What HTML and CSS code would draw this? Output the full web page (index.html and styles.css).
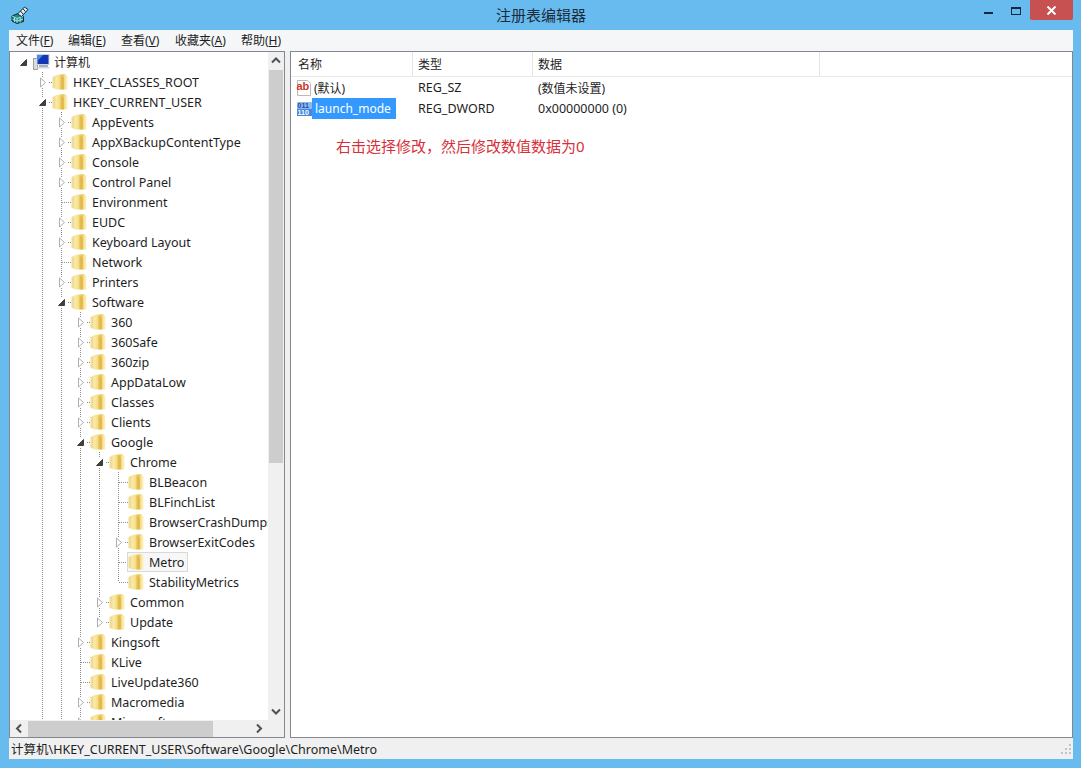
FILE: index.html

```html
<!DOCTYPE html>
<html lang="zh-CN">
<head>
  <meta charset="UTF-8">
  <title>注册表编辑器</title>
  <link rel="stylesheet" href="styles.css">
</head>

<body>

  <svg class="defs" width="0" height="0">
    <defs>
      <linearGradient id="fold" x1="0" y1="0" x2="1" y2="0">
        <stop offset="0" stop-color="#fbeeb0"/>
        <stop offset="0.35" stop-color="#f4dd86"/>
        <stop offset="0.62" stop-color="#e8c156"/>
        <stop offset="0.78" stop-color="#f6e296"/>
        <stop offset="1" stop-color="#fdf3c4"/>
      </linearGradient>
    </defs>
    <symbol id="folder" viewBox="0 0 16 18">
      <path d="M0.5 4 L4 2.5 L4 16 L0.5 15 Z" fill="#f0dc98"/>
      <path d="M3.5 2 L13 1 L15.5 3 L15.5 16.5 L3.5 16.5 Z" fill="url(#fold)"/>
      <path d="M8.5 2 L12 5 L12 16.5 L8.5 16.5 Z" fill="#dfae3e" opacity="0.55"/>
    </symbol>
    <symbol id="closed" viewBox="0 0 19 20">
      <rect x="5" y="5" width="10" height="10" fill="#fff"/>
      <path d="M7.5 6 L12.5 10.5 L7.5 15 Z" fill="#fff" stroke="#b0b0b0"/>
    </symbol>
    <symbol id="open" viewBox="0 0 19 20">
      <rect x="5" y="5" width="10" height="10" fill="#fff"/>
      <path d="M12.5 7.5 L12.5 13.5 L6.5 13.5 Z" fill="#404040" stroke="#404040"/>
    </symbol>
  </svg>

  <div class="titlebar">
    <svg class="appicon" width="18" height="18" viewBox="0 0 18 18">
      <path d="M1 10 L7 7.5 L12.5 10 L12.5 15.5 L6 17.5 L1 15 Z" fill="#1f8f88" stroke="#10283a"/>
      <path d="M1 10 L6 12.5 L12.5 10 M6 12.5 L6 17 M3.5 11.5 L3.5 16 M9.2 11.5 L9.2 16.5 M1.5 13 L6 15 L12 13" fill="none" stroke="#bff0e8" stroke-width="0.8"/>
      <path d="M6.5 8 L13.5 1 L17 3.5 L10.5 10.5 Z" fill="#dfeff2" stroke="#10283a"/>
      <path d="M9.5 5 L12 8 M12 2.8 L14.5 5.6" stroke="#10283a"/>
    </svg>
    <div class="title">注册表编辑器</div>
    <div class="winbtns">
      <span class="minbtn"><i></i></span>
      <span class="maxbtn"><i></i></span>
      <span class="closebtn">
        <svg width="11" height="9" viewBox="0 0 11 9"><path d="M1.5 0.5 L9.5 8.5 M9.5 0.5 L1.5 8.5" stroke="#fff" stroke-width="2"/></svg>
      </span>
    </div>
  </div>

  <div class="menubar">
    <span class="m1">文件(<u>F</u>)</span>
    <span class="m2">编辑(<u>E</u>)</span>
    <span class="m3">查看(<u>V</u>)</span>
    <span class="m4">收藏夹(<u>A</u>)</span>
    <span class="m5">帮助(<u>H</u>)</span>
  </div>

  <div class="main">
    <div class="treepane">
      <div class="treeview">
        <div class="tree">
          <div class="row"><i class="c"><svg><use href="#open"/></svg></i>
            <svg class="pc" width="17" height="18" viewBox="0 0 17 18">
              <rect x="0.5" y="5.5" width="4" height="11" fill="#dcdcdc" stroke="#8a8a8a" stroke-width="0.8"/>
              <rect x="3.5" y="1" width="13" height="11" fill="#c8d4e4"/>
              <rect x="4.5" y="2" width="11" height="9" fill="#1436b0"/>
              <path d="M4.5 2 L10 2 L4.5 8 Z" fill="#3f8cf0"/>
              <rect x="6" y="12" width="9" height="2" fill="#a8b0bc"/>
              <rect x="4.5" y="14" width="12" height="1.5" fill="#d4d8de"/>
            </svg>
            <span class="name">计算机</span></div>

          <div class="row"><i class="c"></i><i class="c tee"><svg><use href="#closed"/></svg></i><svg class="fd"><use href="#folder"/></svg><span class="name">HKEY_CLASSES_ROOT</span></div>
          <div class="row"><i class="c"></i><i class="c tee"><svg><use href="#open"/></svg></i><svg class="fd"><use href="#folder"/></svg><span class="name">HKEY_CURRENT_USER</span></div>

          <div class="row"><i class="c"></i><i class="c g"></i><i class="c tee"><svg><use href="#closed"/></svg></i><svg class="fd"><use href="#folder"/></svg><span class="name">AppEvents</span></div>
          <div class="row"><i class="c"></i><i class="c g"></i><i class="c tee"><svg><use href="#closed"/></svg></i><svg class="fd"><use href="#folder"/></svg><span class="name">AppXBackupContentType</span></div>
          <div class="row"><i class="c"></i><i class="c g"></i><i class="c tee"><svg><use href="#closed"/></svg></i><svg class="fd"><use href="#folder"/></svg><span class="name">Console</span></div>
          <div class="row"><i class="c"></i><i class="c g"></i><i class="c tee"><svg><use href="#closed"/></svg></i><svg class="fd"><use href="#folder"/></svg><span class="name">Control Panel</span></div>
          <div class="row"><i class="c"></i><i class="c g"></i><i class="c tee"></i><svg class="fd"><use href="#folder"/></svg><span class="name">Environment</span></div>
          <div class="row"><i class="c"></i><i class="c g"></i><i class="c tee"><svg><use href="#closed"/></svg></i><svg class="fd"><use href="#folder"/></svg><span class="name">EUDC</span></div>
          <div class="row"><i class="c"></i><i class="c g"></i><i class="c tee"><svg><use href="#closed"/></svg></i><svg class="fd"><use href="#folder"/></svg><span class="name">Keyboard Layout</span></div>
          <div class="row"><i class="c"></i><i class="c g"></i><i class="c tee"></i><svg class="fd"><use href="#folder"/></svg><span class="name">Network</span></div>
          <div class="row"><i class="c"></i><i class="c g"></i><i class="c tee"><svg><use href="#closed"/></svg></i><svg class="fd"><use href="#folder"/></svg><span class="name">Printers</span></div>
          <div class="row"><i class="c"></i><i class="c g"></i><i class="c tee"><svg><use href="#open"/></svg></i><svg class="fd"><use href="#folder"/></svg><span class="name">Software</span></div>

          <div class="row"><i class="c"></i><i class="c g"></i><i class="c g"></i><i class="c tee"><svg><use href="#closed"/></svg></i><svg class="fd"><use href="#folder"/></svg><span class="name">360</span></div>
          <div class="row"><i class="c"></i><i class="c g"></i><i class="c g"></i><i class="c tee"><svg><use href="#closed"/></svg></i><svg class="fd"><use href="#folder"/></svg><span class="name">360Safe</span></div>
          <div class="row"><i class="c"></i><i class="c g"></i><i class="c g"></i><i class="c tee"><svg><use href="#closed"/></svg></i><svg class="fd"><use href="#folder"/></svg><span class="name">360zip</span></div>
          <div class="row"><i class="c"></i><i class="c g"></i><i class="c g"></i><i class="c tee"><svg><use href="#closed"/></svg></i><svg class="fd"><use href="#folder"/></svg><span class="name">AppDataLow</span></div>
          <div class="row"><i class="c"></i><i class="c g"></i><i class="c g"></i><i class="c tee"><svg><use href="#closed"/></svg></i><svg class="fd"><use href="#folder"/></svg><span class="name">Classes</span></div>
          <div class="row"><i class="c"></i><i class="c g"></i><i class="c g"></i><i class="c tee"><svg><use href="#closed"/></svg></i><svg class="fd"><use href="#folder"/></svg><span class="name">Clients</span></div>
          <div class="row"><i class="c"></i><i class="c g"></i><i class="c g"></i><i class="c tee"><svg><use href="#open"/></svg></i><svg class="fd"><use href="#folder"/></svg><span class="name">Google</span></div>

          <div class="row"><i class="c"></i><i class="c g"></i><i class="c g"></i><i class="c g"></i><i class="c tee"><svg><use href="#open"/></svg></i><svg class="fd"><use href="#folder"/></svg><span class="name">Chrome</span></div>

          <div class="row"><i class="c"></i><i class="c g"></i><i class="c g"></i><i class="c g"></i><i class="c g"></i><i class="c tee"></i><svg class="fd"><use href="#folder"/></svg><span class="name">BLBeacon</span></div>
          <div class="row"><i class="c"></i><i class="c g"></i><i class="c g"></i><i class="c g"></i><i class="c g"></i><i class="c tee"></i><svg class="fd"><use href="#folder"/></svg><span class="name">BLFinchList</span></div>
          <div class="row"><i class="c"></i><i class="c g"></i><i class="c g"></i><i class="c g"></i><i class="c g"></i><i class="c tee"></i><svg class="fd"><use href="#folder"/></svg><span class="name">BrowserCrashDumps</span></div>
          <div class="row"><i class="c"></i><i class="c g"></i><i class="c g"></i><i class="c g"></i><i class="c g"></i><i class="c tee"><svg><use href="#closed"/></svg></i><svg class="fd"><use href="#folder"/></svg><span class="name">BrowserExitCodes</span></div>
          <div class="row"><i class="c"></i><i class="c g"></i><i class="c g"></i><i class="c g"></i><i class="c g"></i><i class="c tee"></i><span class="current"><svg class="fd"><use href="#folder"/></svg><span class="name">Metro</span></span></div>
          <div class="row"><i class="c"></i><i class="c g"></i><i class="c g"></i><i class="c g"></i><i class="c g"></i><i class="c last"></i><svg class="fd"><use href="#folder"/></svg><span class="name">StabilityMetrics</span></div>

          <div class="row"><i class="c"></i><i class="c g"></i><i class="c g"></i><i class="c g"></i><i class="c tee"><svg><use href="#closed"/></svg></i><svg class="fd"><use href="#folder"/></svg><span class="name">Common</span></div>
          <div class="row"><i class="c"></i><i class="c g"></i><i class="c g"></i><i class="c g"></i><i class="c last"><svg><use href="#closed"/></svg></i><svg class="fd"><use href="#folder"/></svg><span class="name">Update</span></div>

          <div class="row"><i class="c"></i><i class="c g"></i><i class="c g"></i><i class="c tee"><svg><use href="#closed"/></svg></i><svg class="fd"><use href="#folder"/></svg><span class="name">Kingsoft</span></div>
          <div class="row"><i class="c"></i><i class="c g"></i><i class="c g"></i><i class="c tee"></i><svg class="fd"><use href="#folder"/></svg><span class="name">KLive</span></div>
          <div class="row"><i class="c"></i><i class="c g"></i><i class="c g"></i><i class="c tee"></i><svg class="fd"><use href="#folder"/></svg><span class="name">LiveUpdate360</span></div>
          <div class="row"><i class="c"></i><i class="c g"></i><i class="c g"></i><i class="c tee"><svg><use href="#closed"/></svg></i><svg class="fd"><use href="#folder"/></svg><span class="name">Macromedia</span></div>
          <div class="row"><i class="c"></i><i class="c g"></i><i class="c g"></i><i class="c tee"><svg><use href="#closed"/></svg></i><svg class="fd"><use href="#folder"/></svg><span class="name">Microsoft</span></div>
        </div>

        <div class="vscroll">
          <svg class="arrow" width="16" height="17" viewBox="0 0 16 17"><path d="M4 10.5 L8 6.5 L12 10.5" fill="none" stroke="#505050" stroke-width="2"/></svg>
          <div class="vtrack"><div class="vthumb"></div></div>
          <svg class="arrow" width="16" height="17" viewBox="0 0 16 17"><path d="M4 6.5 L8 10.5 L12 6.5" fill="none" stroke="#505050" stroke-width="2"/></svg>
        </div>
      </div>

      <div class="hscroll">
        <svg class="arrow" width="18" height="17" viewBox="0 0 18 17"><path d="M11 4.5 L7 8.5 L11 12.5" fill="none" stroke="#505050" stroke-width="2"/></svg>
        <div class="hthumb"></div>
        <svg class="arrow" width="18" height="17" viewBox="0 0 18 17"><path d="M7 4.5 L11 8.5 L7 12.5" fill="none" stroke="#505050" stroke-width="2"/></svg>
      </div>
    </div>

    <div class="listpane">
      <div class="listhead">
        <span class="col1">名称</span>
        <span class="col2">类型</span>
        <span class="col3">数据</span>
      </div>

      <div class="listrow">
        <span class="col1">
          <svg class="valicon" width="16" height="18" viewBox="0 0 16 18">
            <path d="M1.5 1.5 L11.5 1.5 L14.5 4.5 L14.5 16.5 L1.5 16.5 Z" fill="#fff" stroke="#c0b8b0"/>
            <text x="0.5" y="11" class="abtext">ab</text>
          </svg>
          <span class="valname">(默认)</span>
        </span>
        <span class="col2">REG_SZ</span>
        <span class="col3 cjk">(数值未设置)</span>
      </div>

      <div class="listrow">
        <span class="col1">
          <svg class="valicon" width="16" height="18" viewBox="0 0 16 18">
            <rect x="1" y="2" width="15" height="14" rx="1" fill="#8db8ee"/>
            <rect x="1" y="9" width="15" height="7" fill="#4a86dc"/>
            <text x="1.5" y="8" class="bintop">011</text>
            <text x="1.5" y="15" class="binlow">110</text>
          </svg>
          <span class="valedit">launch_mode</span>
        </span>
        <span class="col2">REG_DWORD</span>
        <span class="col3">0x00000000 (0)</span>
      </div>

      <div class="note">右击选择修改，然后修改数值数据为0</div>
    </div>
  </div>

  <div class="statusbar">
    <span>计算机\HKEY_CURRENT_USER\Software\Google\Chrome\Metro</span>
    <svg class="grip" width="12" height="12" viewBox="0 0 12 12">
      <path d="M9 1h2v2H9zM5 5h2v2H5zM9 5h2v2H9zM1 9h2v2H1zM5 9h2v2H5zM9 9h2v2H9z" fill="#c4c4c4"/>
    </svg>
  </div>

</body>
</html>
```

FILE: styles.css

```css
* {
  box-sizing: border-box;
}

html,
body {
  height: 100%;
}

body {
  margin: 0;
  padding: 0 8px 9px 9px;
  display: flex;
  flex-direction: column;
  overflow: hidden;
  background: #68bbee;
  font-family: "Noto Sans", "Noto Sans CJK SC", sans-serif;
  font-size: 12.5px;
  color: #1e1e1e;
}

.defs {
  position: absolute;
}

/* title bar */
.titlebar {
  height: 30px;
  flex: none;
  display: flex;
  align-items: center;
  justify-content: center;
  padding-bottom: 2px;
  position: relative;
}

.appicon {
  position: absolute;
  left: 2px;
  top: 6px;
}

.title {
  font-size: 15px;
  color: #1c2b3a;
}

.winbtns {
  position: absolute;
  right: 0;
  top: 0;
  display: flex;
  align-items: flex-start;
}

.minbtn,
.maxbtn {
  width: 27px;
  height: 20px;
  display: flex;
  justify-content: center;
}

.minbtn i {
  width: 9px;
  height: 2px;
  margin-top: 12px;
  background: #14283c;
}

.maxbtn {
  width: 28px;
}

.maxbtn i {
  width: 10px;
  height: 8px;
  margin-top: 7px;
  border: 1px solid #14283c;
  border-top-width: 2px;
}

.closebtn {
  width: 43px;
  height: 20px;
  background: #c75050;
  border-radius: 0 0 2px 2px;
  display: flex;
  align-items: center;
  justify-content: center;
}

/* menu */
.menubar {
  height: 21px;
  flex: none;
  display: flex;
  align-items: center;
  background: #f5f6f7;
  padding: 0 0 2px 7px;
  font-size: 12px;
}

.menubar u {
  text-decoration: underline;
}

.menubar span {
  white-space: nowrap;
}

.m1 { width: 52px; }
.m2 { width: 53px; }
.m3 { width: 54px; }
.m4 { width: 66px; }

/* panes */
.main {
  flex: 1;
  min-height: 0;
  display: flex;
  gap: 5px;
  background: #f0f0f0;
}

.treepane {
  width: 276px;
  flex: none;
  display: flex;
  flex-direction: column;
  background: #f0f0f0;
  border: 1px solid #828790;
}

.treeview {
  flex: 1;
  min-height: 0;
  display: flex;
}

.tree {
  flex: 1;
  min-width: 0;
  overflow: hidden;
  background: #fff;
  padding-left: 4px;
}

.row {
  height: 20px;
  display: flex;
  align-items: center;
  white-space: nowrap;
}

.c {
  width: 19px;
  height: 20px;
  flex: none;
  display: block;
}

.c svg {
  width: 19px;
  height: 20px;
  display: block;
}

.g {
  background: repeating-linear-gradient(to bottom, #8c8c8c 0 1px, transparent 1px 2px) 9px 0 / 1px 100% no-repeat;
}

.tee {
  background:
    repeating-linear-gradient(to bottom, #8c8c8c 0 1px, transparent 1px 2px) 9px 0 / 1px 100% no-repeat,
    repeating-linear-gradient(to right, #8c8c8c 0 1px, transparent 1px 2px) 10px 10px / 9px 1px no-repeat;
}

.last {
  background:
    repeating-linear-gradient(to bottom, #8c8c8c 0 1px, transparent 1px 2px) 9px 0 / 1px 10px no-repeat,
    repeating-linear-gradient(to right, #8c8c8c 0 1px, transparent 1px 2px) 10px 10px / 9px 1px no-repeat;
}

.pc {
  flex: none;
  margin-right: 4px;
}

.pc + .name {
  margin-left: 0;
  font-size: 12px;
}

.fd {
  width: 16px;
  height: 18px;
  flex: none;
}

.name {
  margin-left: 5px;
}

.current {
  display: flex;
  align-items: center;
  height: 20px;
  padding-right: 3px;
  background: #f7f7f7;
  border: 1px solid #d9d9d9;
  margin-left: -1px;
}

.vscroll {
  width: 16px;
  flex: none;
  display: flex;
  flex-direction: column;
  background: #f0f0f0;
}

.arrow {
  flex: none;
}

.vtrack {
  flex: 1;
}

.vthumb {
  height: 393px;
  margin: 1px 1px 0;
  background: #cdcdcd;
}

.hscroll {
  height: 17px;
  flex: none;
  display: flex;
  align-items: center;
  padding-right: 16px;
  background: #f0f0f0;
}

.hthumb {
  width: 185px;
  height: 16px;
  margin-right: auto;
  background: #cdcdcd;
}

.listpane {
  flex: 1;
  min-width: 0;
  background: #fff;
  border: 1px solid #828790;
  display: flex;
  flex-direction: column;
}

.listhead {
  height: 25px;
  flex: none;
  display: flex;
  align-items: center;
  border-bottom: 1px solid #e9e9e9;
  font-size: 12px;
}

.listhead span {
  height: 100%;
  display: flex;
  align-items: center;
  border-right: 1px solid #e5e5e5;
}

.listhead .col1 { width: 122px; padding-left: 7px; }
.listhead .col2 { width: 120px; padding-left: 5px; }
.listhead .col3 { width: 287px; padding-left: 5px; }

.listrow {
  height: 21px;
  flex: none;
  display: flex;
  align-items: center;
  padding-left: 5px;
}

.listrow .col1 {
  width: 122px;
  display: flex;
  align-items: center;
}

.listrow .col2 {
  width: 120px;
}

.cjk {
  font-size: 12px;
}

.valicon {
  flex: none;
}

.valname {
  margin-left: 2px;
  font-size: 12px;
}

.valedit {
  height: 21px;
  width: 84px;
  padding-left: 3px;
  line-height: 21px;
  background: #3399ff;
  color: #fff;
  font-size: 12px;
}

.abtext {
  font-family: "Liberation Sans", sans-serif;
  font-size: 11px;
  font-weight: bold;
  fill: #c93a2e;
}

.bintop,
.binlow {
  font-family: "Liberation Sans", sans-serif;
  font-size: 7px;
  font-weight: bold;
}

.bintop {
  fill: #1d4f9e;
}

.binlow {
  fill: #fff;
}

.note {
  margin: 17px 0 0 45px;
  font-size: 15px;
  color: #d6303a;
  line-height: 20px;
}

/* status */
.statusbar {
  height: 21px;
  flex: none;
  display: flex;
  align-items: center;
  justify-content: space-between;
  background: #f0f0f0;
  padding: 0 1px 0 2px;
}
```
